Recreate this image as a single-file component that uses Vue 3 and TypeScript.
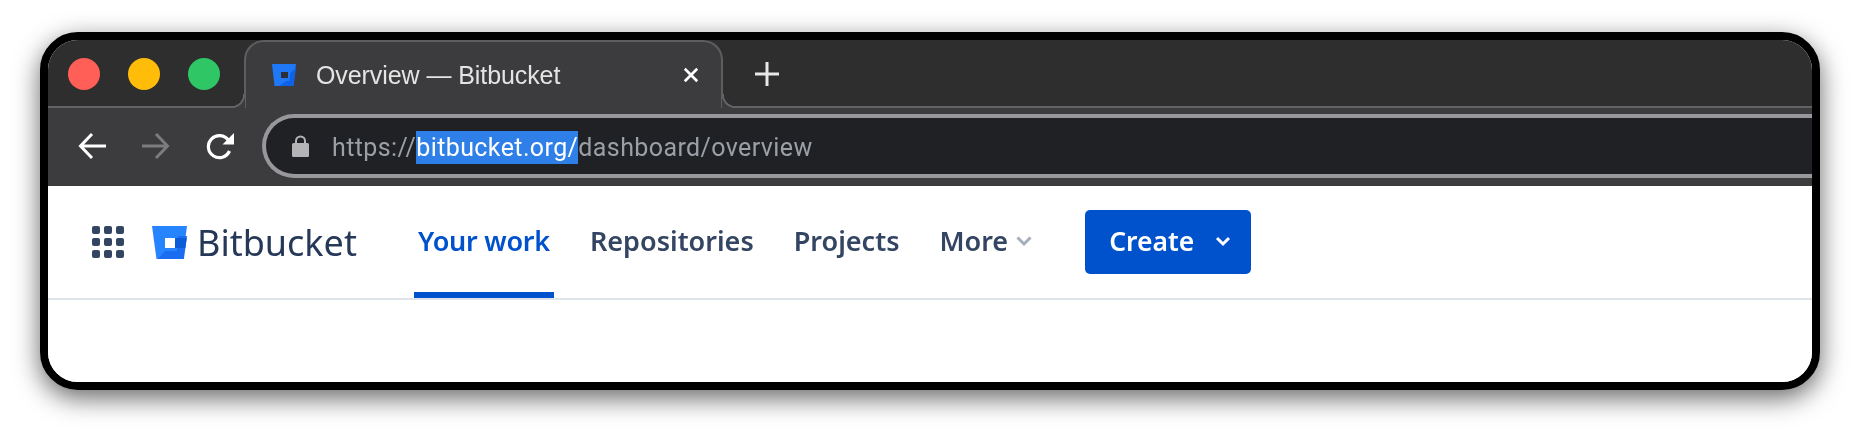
<script setup lang="ts">
const navItems = ['Repositories', 'Projects']
const dots = Array.from({ length: 9 }, (_, i) => i)
</script>

<template>
  <div class="page">
    <div class="frame">
      <div class="tabstrip">
        <div class="lights">
          <span class="light red"></span>
          <span class="light yellow"></span>
          <span class="light green"></span>
        </div>
        <div class="tab">
          <svg class="favicon" viewBox="0 0 24 22">
            <path d="M0 0h24l-2.500 22H2.500z" fill="#1f78f5" />
            <path d="M24 4l-2.500 18H7l7-5h3.500l1-8z" fill="#0f62e6" />
            <rect x="9" y="8" width="7" height="6" fill="#2b2f36" />
          </svg>
          <span class="tab-title">Overview — Bitbucket</span>
          <svg class="tab-close" viewBox="0 0 18 18">
            <path d="M2 2l14 14M16 2L2 16" stroke="#fff" stroke-width="3" />
          </svg>
        </div>
        <svg class="new-tab" viewBox="0 0 24 24">
          <path d="M12 0v24M0 12h24" stroke="#e8e8e8" stroke-width="3" />
        </svg>
      </div>

      <div class="toolbar">
        <svg class="tool" viewBox="0 0 28 28">
          <path d="M28 14H3M14 2L2.500 14 14 26" fill="none" stroke="#fff" stroke-width="3" />
        </svg>
        <svg class="tool" viewBox="0 0 28 28">
          <path d="M0 14h25M14 2l11.500 12L14 26" fill="none" stroke="#7c7c7c" stroke-width="3" />
        </svg>
        <svg class="tool" viewBox="0 0 28 28">
          <path d="M23.500 19a11 11 0 1 1-1-10.500" fill="none" stroke="#fff" stroke-width="3.200" />
          <path d="M28 1v11.500H16.500z" fill="#fff" />
        </svg>
        <div class="omnibox">
          <svg class="lock" viewBox="0 0 17 22">
            <path d="M4 9V6a4.500 4.500 0 0 1 9 0v3" fill="none" stroke="#b4b4b6" stroke-width="2" />
            <rect y="8" width="17" height="14" rx="1.500" fill="#b4b4b6" />
          </svg>
          <span class="url">https://<span class="selected">bitbucket.org/</span>dashboard/overview</span>
        </div>
      </div>

      <nav class="nav">
        <div class="grid-icon">
          <span v-for="d in dots" :key="d" class="dot"></span>
        </div>
        <div class="brand">
          <svg class="logo" viewBox="0 0 35 33">
            <path d="M0 0h35l-4.500 33H4.500z" fill="#2684ff" />
            <path d="M35 10l-3.100 23H6l7-8h12l1-15z" fill="#1a6df0" />
            <path d="M23 12h11.700l-1.300 10H23z" fill="#0b5cd8" />
            <rect x="13" y="12" width="10" height="10" fill="#fff" />
          </svg>
          <span class="brand-name">Bitbucket</span>
        </div>
        <div class="links">
          <a class="link active"><span class="label">Your work</span></a>
          <a v-for="item in navItems" :key="item" class="link"><span class="label">{{ item }}</span></a>
          <a class="link">
            <span class="label">More</span>
            <svg class="more-chevron" viewBox="0 0 18 12">
              <path d="M2.500 2.500L9 9l6.500-6.500" fill="none" stroke="#a5adba" stroke-width="3" />
            </svg>
          </a>
        </div>
        <button class="create">
          <span class="label">Create</span>
          <svg class="create-chevron" viewBox="0 0 16 12">
            <path d="M2 3l6 6 6-6" fill="none" stroke="#fff" stroke-width="3" />
          </svg>
        </button>
      </nav>
      <div class="body"></div>
    </div>
  </div>
</template>

<style>
html,
body {
  margin: 0;
  background: #fff;
}
</style>

<style scoped>
.page {
  width: 1860px;
  height: 438px;
  padding: 32px 40px 48px;
  box-sizing: border-box;
  overflow: hidden;
}

.frame {
  height: 358px;
  box-sizing: border-box;
  border: 8px solid #000;
  border-radius: 38px;
  overflow: hidden;
  display: flex;
  flex-direction: column;
  background: #fff;
  box-shadow: 0 8px 26px rgba(0, 0, 0, 0.6);
}

.tabstrip {
  height: 68px;
  flex: none;
  box-sizing: border-box;
  display: flex;
  align-items: stretch;
  background: #2e2e2e;
  border-bottom: 2px solid #626266;
}

.lights {
  width: 196px;
  flex: none;
  box-sizing: border-box;
  padding: 18px 0 0 20px;
  display: flex;
  gap: 28px;
}

.light {
  width: 32px;
  height: 32px;
  border-radius: 50%;
}

.red {
  background: #ff5f57;
}

.yellow {
  background: #ffbd09;
}

.green {
  background: #2fc666;
}

.tab {
  position: relative;
  width: 479px;
  flex: none;
  box-sizing: border-box;
  margin-bottom: -2px;
  padding: 0 22px 0 26px;
  display: flex;
  align-items: center;
  background: #3c3c3e;
  border: 2px solid #5e5e60;
  border-bottom: none;
  border-radius: 20px 20px 0 0;
}

.tab::before,
.tab::after {
  content: '';
  position: absolute;
  bottom: 0;
  width: 14px;
  height: 14px;
}

.tab::before {
  left: -15px;
  background: radial-gradient(circle at 0 0, #2e2e2e 12px, #626266 12.500px, #626266 14px, #3c3c3e 14.500px);
}

.tab::after {
  right: -15px;
  background: radial-gradient(circle at 100% 0, #2e2e2e 12px, #626266 12.500px, #626266 14px, #3c3c3e 14.500px);
}

.favicon {
  width: 24px;
  height: 22px;
  flex: none;
}

.tab-title {
  margin-left: 20px;
  font: 25px "Liberation Sans", sans-serif;
  letter-spacing: -0.080px;
  color: #e4e4e4;
  white-space: nowrap;
  filter: blur(0.4px);
}

.tab-close {
  width: 16px;
  height: 16px;
  margin-left: auto;
}

.new-tab {
  width: 24px;
  height: 24px;
  margin: 22px 0 0 32px;
}

.toolbar {
  height: 78px;
  flex: none;
  box-sizing: border-box;
  display: flex;
  align-items: flex-start;
  padding: 6px 0 0 30px;
  background: #3c3c3e;
}

.tool {
  width: 28px;
  height: 28px;
  margin: 18px 36px 0 0;
  flex: none;
}

.omnibox {
  flex: 1;
  height: 64px;
  box-sizing: border-box;
  margin-left: -8px;
  padding: 2px 0 0 26px;
  display: flex;
  align-items: center;
  background: #202124;
  border: 4px solid #98989c;
  border-right: none;
  border-radius: 32px 0 0 32px;
}

.lock {
  width: 17px;
  height: 22px;
  flex: none;
  margin-top: -2px;
}

.url {
  margin-left: 23px;
  font: 25px Roboto, sans-serif;
  letter-spacing: 0.400px;
  color: #9aa0a6;
  white-space: nowrap;
  filter: blur(0.4px);
}

.selected {
  background: #2f7fe8;
  color: #fff;
  padding: 2px 0;
}

.nav {
  height: 114px;
  flex: none;
  box-sizing: border-box;
  display: flex;
  align-items: flex-start;
  padding-left: 44px;
  background: #fff;
  border-bottom: 2px solid #dfe3ea;
  box-shadow: 0 2px 4px rgba(9, 30, 66, 0.05);
}

.grid-icon {
  width: 32px;
  margin-top: 40px;
  display: grid;
  grid-template-columns: repeat(3, 8px);
  gap: 4px;
  flex: none;
}

.dot {
  width: 8px;
  height: 8px;
  border-radius: 2px;
  background: #344563;
}

.brand {
  margin: 40px 0 0 28px;
  display: flex;
  align-items: center;
  gap: 10px;
  flex: none;
  width: 266px;
}

.logo {
  width: 35px;
  height: 33px;
  flex: none;
}

.brand-name {
  font: 36px "Noto Sans", sans-serif;
  color: #253858;
  line-height: 33px;
  filter: blur(0.4px);
}

.links {
  display: flex;
  height: 112px;
  gap: 40px;
  flex: none;
}

.link {
  position: relative;
  display: flex;
  align-items: center;
  gap: 7px;
  height: 112px;
  box-sizing: border-box;
  padding-bottom: 3px;
  font: 600 27px "Noto Sans", sans-serif;
  color: #344563;
  white-space: nowrap;
}

.label {
  filter: blur(0.4px);
}

.active {
  color: #0052cc;
  letter-spacing: -0.250px;
}

.active::after {
  content: '';
  position: absolute;
  left: -4px;
  right: -4px;
  bottom: 0;
  height: 6px;
  background: #0052cc;
}

.more-chevron {
  width: 18px;
  height: 12px;
}

.create {
  width: 166px;
  height: 64px;
  margin: 24px 0 0 52px;
  padding: 0 0 2px 24px;
  display: flex;
  align-items: center;
  gap: 21px;
  flex: none;
  border: none;
  border-radius: 5px;
  background: #0052cc;
  color: #fff;
  font: 600 26.500px "Noto Sans", sans-serif;
}

.create-chevron {
  width: 16px;
  height: 12px;
}

.body {
  flex: 1;
  background: #fff;
}
</style>
